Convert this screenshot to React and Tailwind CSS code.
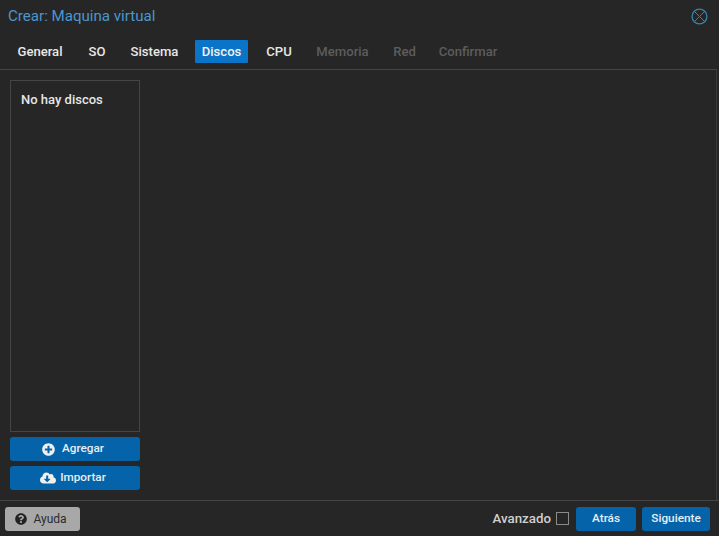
import React from 'react';
import { FaPlusCircle, FaCloudDownloadAlt, FaQuestionCircle } from 'react-icons/fa';

const tabs = [
  { label: 'General', width: 'w-[60px]' },
  { label: 'SO', width: 'w-[34px]' },
  { label: 'Sistema', width: 'w-[61px]' },
  { label: 'Discos', width: 'w-[53px]', active: true },
  { label: 'CPU', width: 'w-[42px]' },
  { label: 'Memoria', width: 'w-[65px]', disabled: true },
  { label: 'Red', width: 'w-[39px]', disabled: true },
  { label: 'Confirmar', width: 'w-[68px]', disabled: true },
];

function Tab({ label, width, active, disabled }) {
  return (
    <div
      className={
        'h-[23px] rounded-[1px] flex items-center justify-center text-[13.1px] font-medium whitespace-nowrap ' +
        width + ' ' +
        (active ? 'bg-[#0a74c9] text-[#f2f2f2] ' : disabled ? 'text-[#5d5d5d] ' : 'text-[#e8e8e8] ')
      }
    >
      {label}
    </div>
  );
}

function BlueButton({ children, className }) {
  return (
    <button className={'h-[24px] bg-[#0563a9] rounded-[3px] text-[#e8eef3] text-[11.75px] font-medium flex items-center justify-center ' + className}>
      {children}
    </button>
  );
}

export default function App() {
  return (
    <div className="w-[719px] h-[536px] bg-[#262626] flex flex-col overflow-hidden font-['Roboto',sans-serif]">
      <div className="h-[32px] pl-[8px] pr-[11px] flex items-center justify-between">
        <span className="text-[15.1px] text-[#4b97cf]">Crear: Maquina virtual</span>
        <svg width="17" height="17" viewBox="0 0 17 17" fill="none" stroke="#2f88ad" strokeWidth="1.3">
          <circle cx="8.5" cy="8.5" r="7.4" />
          <path d="M3.4 3.4 L13.6 13.6 M13.6 3.4 L3.4 13.6" strokeWidth="1" />
        </svg>
      </div>
      <div className="h-[38px] pl-[10px] pt-[8px] mr-[2px] flex items-start gap-[10px] border-b border-[#454545]">
        {tabs.map((t) => (
          <Tab key={t.label} {...t} />
        ))}
      </div>
      <div className="flex-1 pl-[10px] pt-[10px] pb-[10px] mr-[2px] border-r border-[#3a3a3a] flex flex-col gap-[5px]">
        <div className="w-[130px] flex-1 border border-[#454545] px-[10px] pt-[9px] text-[13px] font-medium text-[#e6e6e6]">
          No hay discos
        </div>
        <BlueButton className="w-[130px] gap-[7px] pr-[4px]">
          <FaPlusCircle className="text-[13px] text-[#f0f0f0]" />
          <span>Agregar</span>
        </BlueButton>
        <BlueButton className="w-[130px] gap-[4px] pr-[4px]">
          <FaCloudDownloadAlt className="text-[16px] text-[#f0f0f0]" />
          <span>Importar</span>
        </BlueButton>
      </div>
      <div className="h-[36px] border-t border-[#454545] pl-[5px] pr-[9px] flex items-center justify-between">
        <button className="w-[75px] h-[24px] bg-[#a8a8a8] rounded-[3px] text-[#2b2b2b] text-[12px] flex items-center justify-center gap-[6px] pr-[3px]">
          <FaQuestionCircle className="text-[12px] text-[#222222]" />
          <span>Ayuda</span>
        </button>
        <div className="flex items-center">
          <span className="text-[13.3px] font-medium text-[#d0d0d0] mr-[5px]">Avanzado</span>
          <div className="w-[13px] h-[13px] border border-[#8a8a8a] mr-[7px]" />
          <BlueButton className="w-[60px] mr-[6px]">Atrás</BlueButton>
          <BlueButton className="w-[68px]">Siguiente</BlueButton>
        </div>
      </div>
    </div>
  );
}
